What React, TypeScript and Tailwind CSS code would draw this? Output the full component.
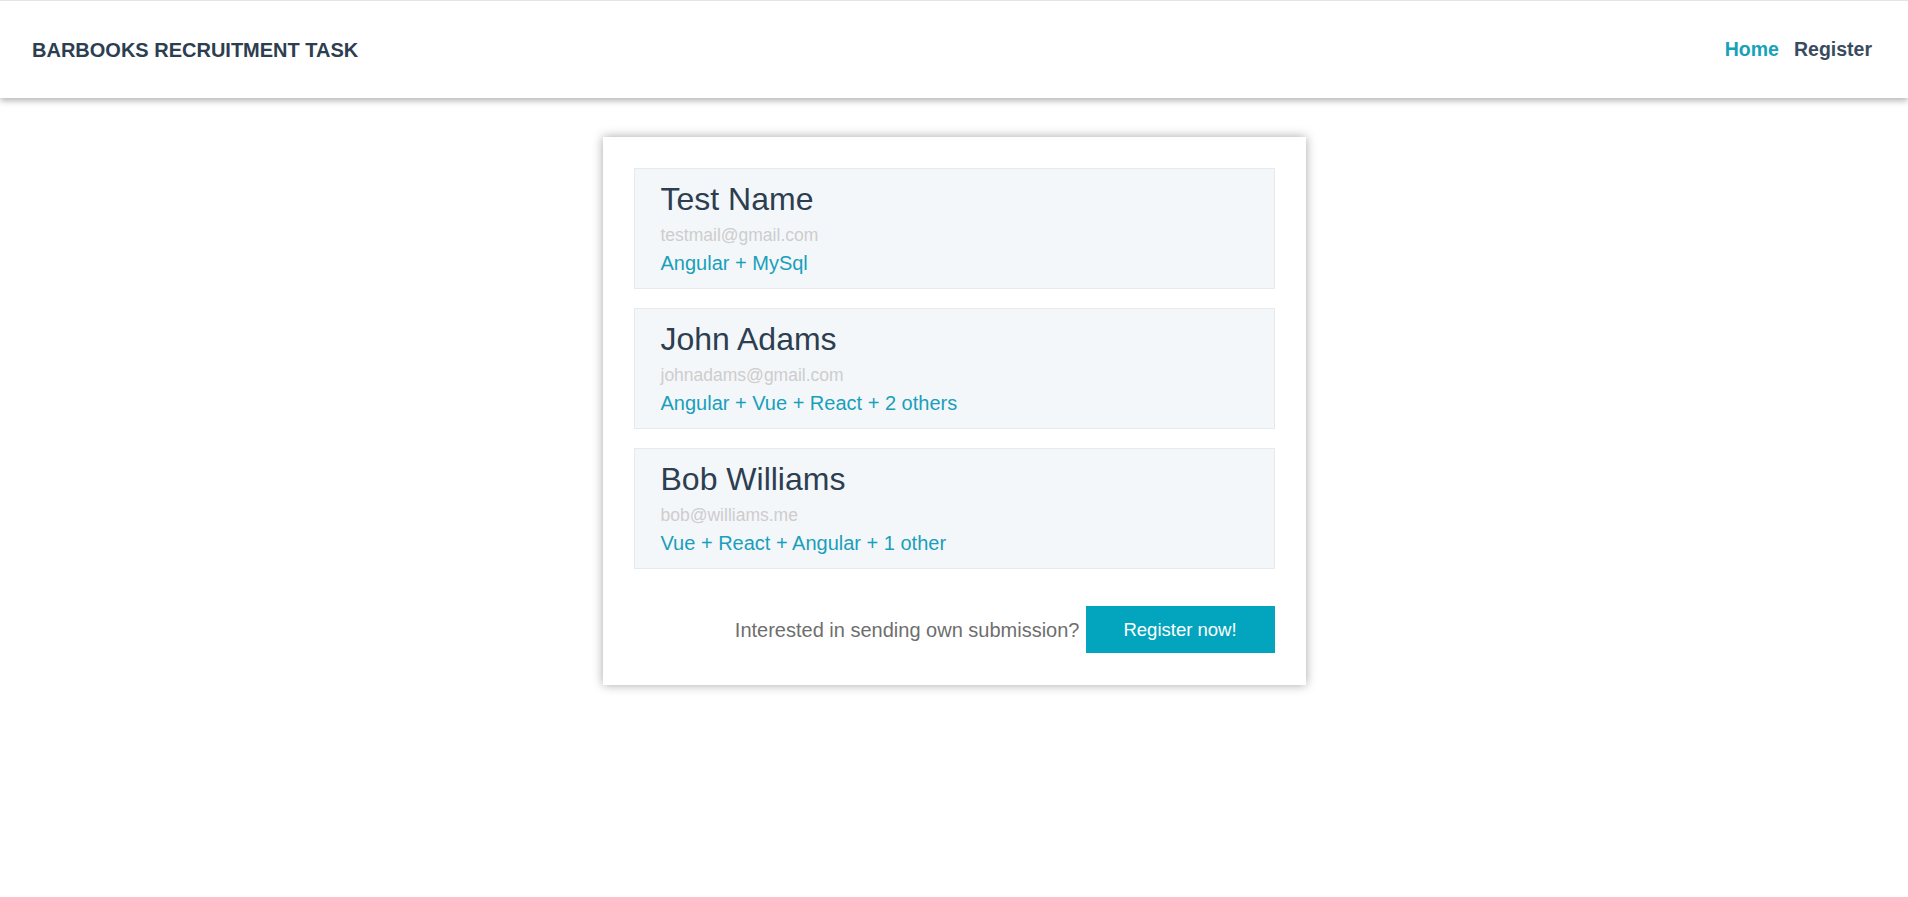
const submissions = [
  { name: 'Test Name', email: 'testmail@gmail.com', skills: 'Angular + MySql' },
  { name: 'John Adams', email: 'johnadams@gmail.com', skills: 'Angular + Vue + React + 2 others' },
  { name: 'Bob Williams', email: 'bob@williams.me', skills: 'Vue + React + Angular + 1 other' },
]

export default function App() {
  return (
    <div className="min-h-screen bg-white font-['Liberation_Sans',Arial,sans-serif]">
      {/* Header */}
      <header className="h-[98px] border-t border-[#e4e4e4] bg-white flex items-center justify-between pl-[32px] pr-[36px] shadow-[0_3px_6px_rgba(0,0,0,0.28)] relative">
        <h1 className="text-[20px] font-bold text-[#2c3e50]">BARBOOKS RECRUITMENT TASK</h1>
        <nav className="flex items-center gap-[15px] text-[19.5px] font-bold">
          <a className="text-[#17a2b8]">Home</a>
          <a className="text-[#3a4b60]">Register</a>
        </nav>
      </header>

      {/* Card */}
      <main className="pt-[39px]">
        <div className="mx-auto w-[703px] bg-white p-[31px] pb-[32px] shadow-[0_0_10px_rgba(0,0,0,0.35)]">
          <div className="flex flex-col gap-[19px]">
            {submissions.map((s) => (
              <div key={s.email} className="border border-[#e7eaed] bg-[#f4f7fa] pl-[26px] pt-[12px] pb-[11px]">
                <div className="text-[32px] leading-[36px] text-[#2c3e50]">{s.name}</div>
                <div className="mt-[6px] text-[17.5px] leading-[24px] text-[#cdcdcd]">{s.email}</div>
                <div className="text-[20px] leading-[28px] text-[#1a9fba] pt-[2px]">{s.skills}</div>
              </div>
            ))}
          </div>

          <div className="mt-[37px] flex items-center justify-end gap-[6px]">
            <span className="text-[20px] text-[#6e6e6e]">Interested in sending own submission?</span>
            <button className="h-[47px] w-[189px] bg-[#02a5bd] text-[18.5px] text-white">Register now!</button>
          </div>
        </div>
      </main>
    </div>
  )
}
